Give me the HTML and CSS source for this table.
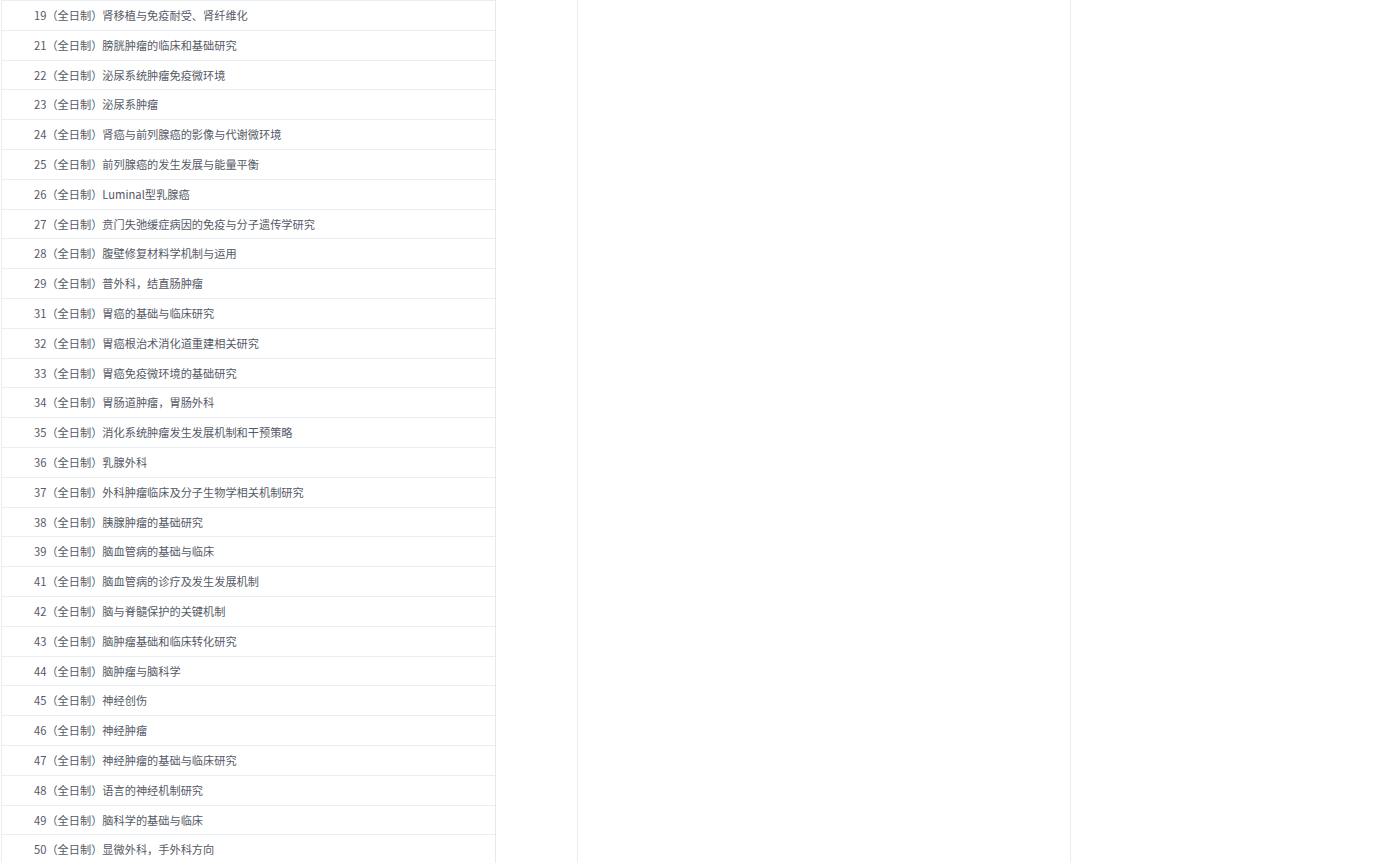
FILE: index.html
```html
<!DOCTYPE html>
<html lang="zh-CN">
<head>
  <meta charset="UTF-8" />
  <title>研究方向</title>
  <link rel="stylesheet" href="styles.css">
</head>
<body>
  <div class="page">
    <div class="list">
      <div class="row">19（全日制）肾移植与免疫耐受、肾纤维化</div>
      <div class="row">21（全日制）膀胱肿瘤的临床和基础研究</div>
      <div class="row">22（全日制）泌尿系统肿瘤免疫微环境</div>
      <div class="row">23（全日制）泌尿系肿瘤</div>
      <div class="row">24（全日制）肾癌与前列腺癌的影像与代谢微环境</div>
      <div class="row">25（全日制）前列腺癌的发生发展与能量平衡</div>
      <div class="row">26（全日制）Luminal型乳腺癌</div>
      <div class="row">27（全日制）贲门失弛缓症病因的免疫与分子遗传学研究</div>
      <div class="row">28（全日制）腹壁修复材料学机制与运用</div>
      <div class="row">29（全日制）普外科，结直肠肿瘤</div>
      <div class="row">31（全日制）胃癌的基础与临床研究</div>
      <div class="row">32（全日制）胃癌根治术消化道重建相关研究</div>
      <div class="row">33（全日制）胃癌免疫微环境的基础研究</div>
      <div class="row">34（全日制）胃肠道肿瘤，胃肠外科</div>
      <div class="row">35（全日制）消化系统肿瘤发生发展机制和干预策略</div>
      <div class="row">36（全日制）乳腺外科</div>
      <div class="row">37（全日制）外科肿瘤临床及分子生物学相关机制研究</div>
      <div class="row">38（全日制）胰腺肿瘤的基础研究</div>
      <div class="row">39（全日制）脑血管病的基础与临床</div>
      <div class="row">41（全日制）脑血管病的诊疗及发生发展机制</div>
      <div class="row">42（全日制）脑与脊髓保护的关键机制</div>
      <div class="row">43（全日制）脑肿瘤基础和临床转化研究</div>
      <div class="row">44（全日制）脑肿瘤与脑科学</div>
      <div class="row">45（全日制）神经创伤</div>
      <div class="row">46（全日制）神经肿瘤</div>
      <div class="row">47（全日制）神经肿瘤的基础与临床研究</div>
      <div class="row">48（全日制）语言的神经机制研究</div>
      <div class="row">49（全日制）脑科学的基础与临床</div>
      <div class="row">50（全日制）显微外科，手外科方向</div>
    </div>
    <div class="col narrow"></div>
    <div class="col wide"></div>
  </div>
</body>
</html>
```

FILE: styles.css
```css
html, body {
  margin: 0;
  padding: 0;
  background: #fff;
  overflow: hidden;
}
body {
  font-family: "Microsoft YaHei", "Noto Sans CJK SC", sans-serif;
  font-size: 11.2px;
  color: #555a66;
}
.page {
  display: flex;
  height: 863px;
  padding-left: 1px;
}
.list {
  width: 493px;
  flex: none;
  border-left: 1px solid #e8eef2;
  border-right: 1px solid #e4ebef;
  border-top: 1px solid #e8eef2;
  align-self: flex-start;
}
.row {
  height: 28.8px;
  line-height: 28.8px;
  padding-left: 32px;
  border-bottom: 1px solid #e8eef2;
  white-space: nowrap;
}
.col {
  flex: none;
  height: 863px;
  border-right: 1px solid #e8eef2;
}
.narrow {
  width: 81px;
}
.wide {
  width: 492px;
}
```
